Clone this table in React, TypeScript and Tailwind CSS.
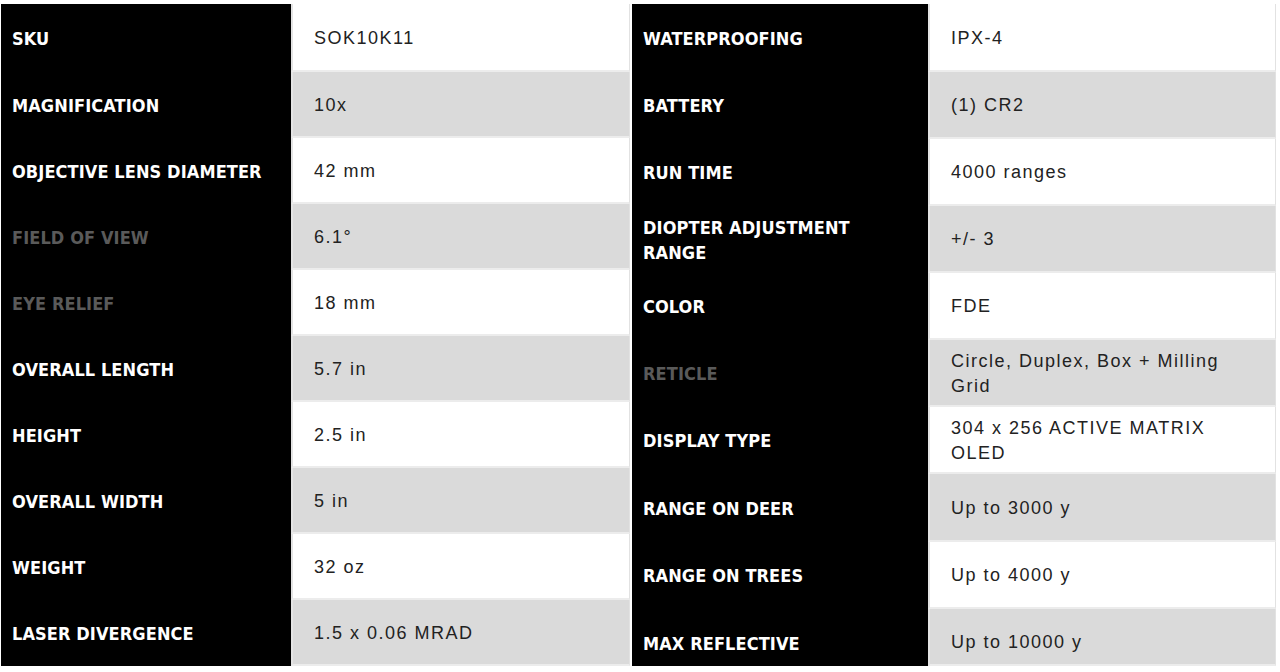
import React from "react";

type Row = { label: string[]; value: string[]; dim?: boolean; gray: boolean; h: string; pad?: string };

const left: Row[] = [
  { label: ["SKU"], value: ["SOK10K11"], gray: false, h: "h-[68px]" },
  { label: ["MAGNIFICATION"], value: ["10x"], gray: true, h: "h-[66px]" },
  { label: ["OBJECTIVE LENS DIAMETER"], value: ["42 mm"], gray: false, h: "h-[66px]" },
  { label: ["FIELD OF VIEW"], value: ["6.1°"], dim: true, gray: true, h: "h-[66px]" },
  { label: ["EYE RELIEF"], value: ["18 mm"], dim: true, gray: false, h: "h-[66px]" },
  { label: ["OVERALL LENGTH"], value: ["5.7 in"], gray: true, h: "h-[66px]" },
  { label: ["HEIGHT"], value: ["2.5 in"], gray: false, h: "h-[66px]" },
  { label: ["OVERALL WIDTH"], value: ["5 in"], gray: true, h: "h-[66px]" },
  { label: ["WEIGHT"], value: ["32 oz"], gray: false, h: "h-[66px]" },
  { label: ["LASER DIVERGENCE"], value: ["1.5 x 0.06 MRAD"], gray: true, h: "h-[66px]" },
];

const right: Row[] = [
  { label: ["WATERPROOFING"], value: ["IPX-4"], gray: false, h: "h-[68px]" },
  { label: ["BATTERY"], value: ["(1) CR2"], gray: true, h: "h-[67px]" },
  { label: ["RUN TIME"], value: ["4000 ranges"], gray: false, h: "h-[67px]" },
  { label: ["DIOPTER ADJUSTMENT", "RANGE"], value: ["+/- 3"], gray: true, h: "h-[67px]" },
  { label: ["COLOR"], value: ["FDE"], gray: false, h: "h-[67px]" },
  { label: ["RETICLE"], value: ["Circle, Duplex, Box + Milling", "Grid"], dim: true, gray: true, h: "h-[67px]" },
  { label: ["DISPLAY TYPE"], value: ["304 x 256 ACTIVE MATRIX", "OLED"], gray: false, h: "h-[67px]" },
  { label: ["RANGE ON DEER"], value: ["Up to 3000 y"], gray: true, h: "h-[68px]" },
  { label: ["RANGE ON TREES"], value: ["Up to 4000 y"], gray: false, h: "h-[67px]" },
  { label: ["MAX REFLECTIVE"], value: ["Up to 10000 y"], gray: true, h: "h-[57px]", pad: "pt-[12px]" },
];

const labelFont = {
  fontFamily: "'Liberation Sans Narrow', 'DejaVu Sans Condensed', 'Liberation Sans', sans-serif",
};
const valueFont = { fontFamily: "'Liberation Sans', 'Noto Sans', sans-serif" };

function Table({ rows, labelW, valueW }: { rows: Row[]; labelW: string; valueW: string }) {
  return (
    <div className="flex flex-col">
      {rows.map((r, i) => (
        <div key={i} className={`flex ${r.h}`}>
          <div
            className={`${labelW} ${r.pad ?? ""} bg-black flex flex-col justify-center pl-[11px] text-[18px] font-bold leading-[25px] tracking-[0.1px] ${
              r.dim ? "text-[#5a5a5a]" : "text-white"
            }`}
            style={labelFont}
          >
            {r.label.map((l, j) => (
              <div key={j}>{l}</div>
            ))}
          </div>
          <div
            className={`${valueW} ${r.pad ?? "pt-[2px]"} flex flex-col justify-center pl-[21px] border-l-2 border-r border-b-2 border-l-[#e4e4e4] border-r-[#e2e2e2] border-b-[#ececec] text-[18px] leading-[25px] tracking-[1.5px] text-[#222222] ${
              r.gray ? "bg-[#dadada]" : "bg-white"
            }`}
            style={valueFont}
          >
            {r.value.map((v, j) => (
              <div key={j}>{v}</div>
            ))}
          </div>
        </div>
      ))}
    </div>
  );
}

export default function App() {
  return (
    <div className="w-[1280px] h-[672px] bg-white overflow-hidden flex pt-[4px]">
      <div className="ml-[1px]">
        <Table rows={left} labelW="w-[290px]" valueW="w-[339px]" />
      </div>
      <div className="ml-[2px]">
        <Table rows={right} labelW="w-[296px]" valueW="w-[348px]" />
      </div>
    </div>
  );
}
